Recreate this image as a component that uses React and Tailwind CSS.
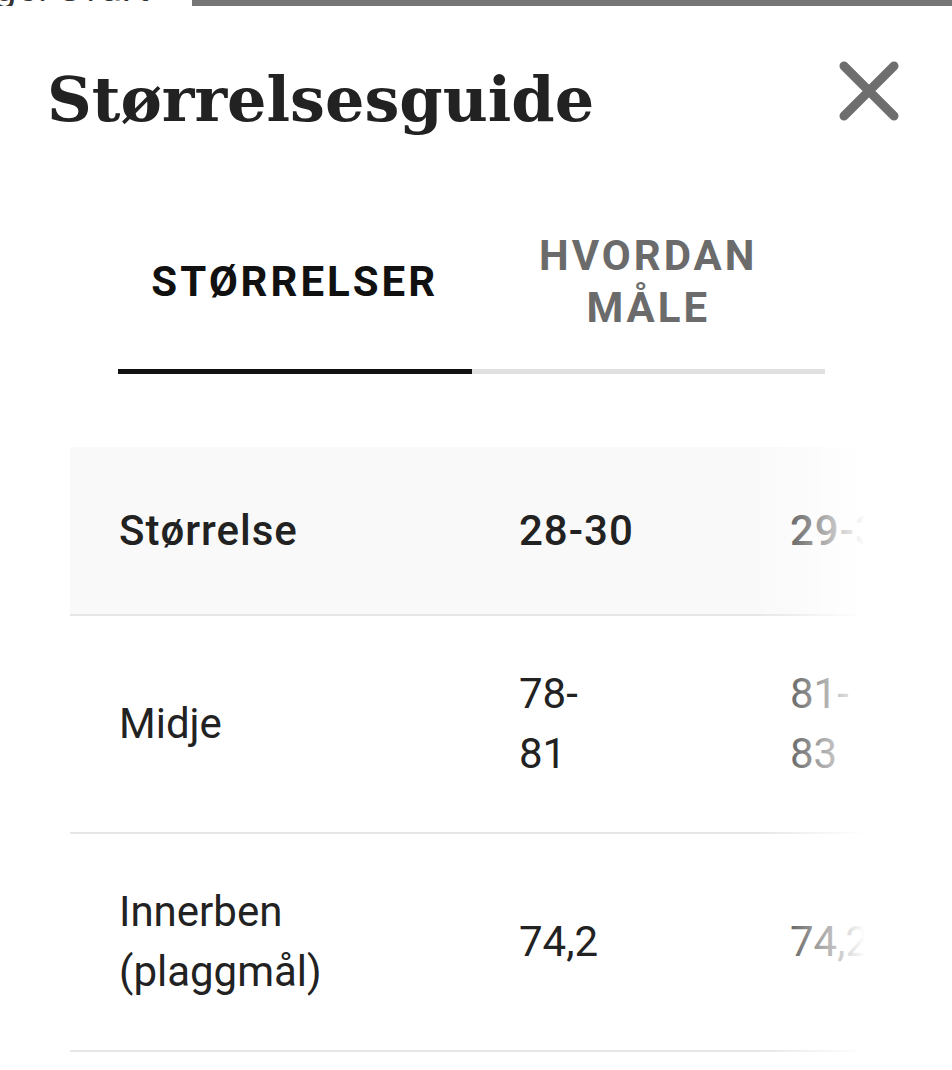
import React from "react";

const rows = [
  { label: "Midje", values: [["78-", "81"], ["81-", "83"]] },
  { label: ["Innerben", "(plaggmål)"], values: [["74,2"], ["74,2"]] },
];

const CloseIcon = () => (
  <svg width="62" height="62" viewBox="0 0 62 62" fill="none">
    <path d="M6 6L56 56M56 6L6 56" stroke="#6e6e6e" strokeWidth="9" strokeLinecap="round" />
  </svg>
);

export default function App() {
  return (
    <div className="w-[952px] h-[1070px] overflow-hidden bg-white text-[#222]" style={{ fontFamily: "Roboto, 'Liberation Sans', sans-serif" }}>
      {/* clipped select above the sheet */}
      <div className="h-[6px] flex overflow-hidden">
        <div className="w-[192px] bg-white overflow-hidden">
          <div className="-mt-[32px] text-[40px] leading-[40px] text-[#333] whitespace-nowrap -ml-[6px]">ge: Svart</div>
        </div>
        <div className="flex-1 bg-[#767676]"></div>
      </div>

      {/* Header */}
      <div className="flex items-start justify-between pl-[47px] pr-[52px] pt-[54px]">
        <h1
          className="text-[62px] leading-[80px] font-bold text-[#222]"
          style={{ fontFamily: "'DejaVu Serif', 'Liberation Serif', serif" }}
        >
          Størrelsesguide
        </h1>
        <div>
          <CloseIcon />
        </div>
      </div>

      {/* Tabs */}
      <div className="mt-[79px] mx-[118px] w-[707px]">
        <div className="flex h-[150px]">
          <div className="w-1/2 flex items-center justify-center pb-[24px]">
            <span className="text-[42px] leading-[52px] font-bold tracking-[3px] text-[#111]">STØRRELSER</span>
          </div>
          <div className="w-1/2 flex items-center justify-center pb-[24px]">
            <span className="text-[42px] leading-[52px] font-bold tracking-[3px] text-[#6b6b6b] text-center">
              HVORDAN
              <br />
              MÅLE
            </span>
          </div>
        </div>
        <div className="flex h-[5px]">
          <div className="w-1/2 bg-[#111]"></div>
          <div className="w-1/2 bg-[#e0e0e0]"></div>
        </div>
      </div>

      {/* Table */}
      <div className="relative ml-[70px] mt-[73px] w-[795px] overflow-hidden text-[42px]">
        <div className="flex h-[169px] bg-[#f9f9f9] border-b-2 border-[#e6e6e6] tracking-[1px]">
          <div className="w-[347px] shrink-0 pl-[49px] flex items-center font-medium">Størrelse</div>
          <div className="w-[271px] shrink-0 pl-[102px] flex items-center font-medium">28-30</div>
          <div className="w-[271px] shrink-0 pl-[102px] flex items-center font-medium">29-31</div>
        </div>
        {rows.map((row, i) => (
          <div key={i} className="flex h-[218px] border-b-2 border-[#e6e6e6] leading-[60px]">
            <div className="w-[347px] shrink-0 pl-[49px] flex items-center">
              <div>
                {Array.isArray(row.label) ? row.label.map((l) => <div key={l}>{l}</div>) : row.label}
              </div>
            </div>
            {row.values.map((v, j) => (
              <div key={j} className="w-[271px] shrink-0 pl-[102px] flex items-center">
                <div>
                  {v.map((t) => (
                    <div key={t}>{t}</div>
                  ))}
                </div>
              </div>
            ))}
          </div>
        ))}
        {/* right fade */}
        <div className="absolute top-0 right-0 h-full w-[110px] bg-gradient-to-r from-white/0 to-white pointer-events-none"></div>
      </div>
    </div>
  );
}
